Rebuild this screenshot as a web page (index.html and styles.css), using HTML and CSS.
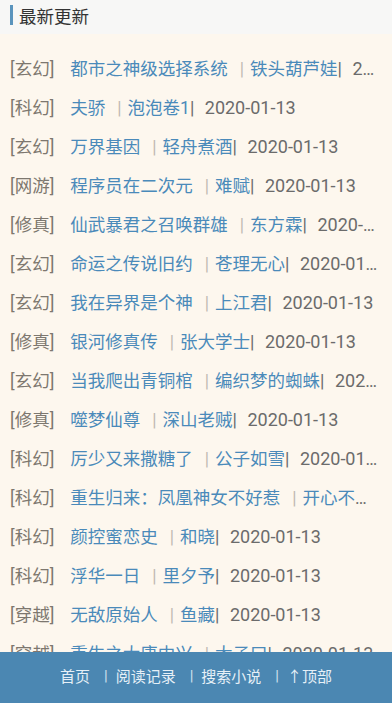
FILE: index.html
```html
<!DOCTYPE html>
<html lang="zh-CN">
<head>
<meta charset="utf-8">
<meta name="viewport" content="width=device-width, initial-scale=1">
<title>最新更新</title>
<link rel="stylesheet" href="styles.css">
</head>
<body>
<header class="head"><span class="head-bar"></span><h2 class="head-title">最新更新</h2></header>
<ul class="list">
<li class="row"><span class="cat">[玄幻]</span><a class="name" href="#">都市之神级选择系统</a><span class="sep">|</span><a class="author" href="#">铁头葫芦娃</a><span class="date">| 2020-01-13</span></li>
<li class="row"><span class="cat">[科幻]</span><a class="name" href="#">夫骄</a><span class="sep">|</span><a class="author" href="#">泡泡卷1</a><span class="date">| 2020-01-13</span></li>
<li class="row"><span class="cat">[玄幻]</span><a class="name" href="#">万界基因</a><span class="sep">|</span><a class="author" href="#">轻舟煮酒</a><span class="date">| 2020-01-13</span></li>
<li class="row"><span class="cat">[网游]</span><a class="name" href="#">程序员在二次元</a><span class="sep">|</span><a class="author" href="#">难赋</a><span class="date">| 2020-01-13</span></li>
<li class="row"><span class="cat">[修真]</span><a class="name" href="#">仙武暴君之召唤群雄</a><span class="sep">|</span><a class="author" href="#">东方霖</a><span class="date">| 2020-01-13</span></li>
<li class="row"><span class="cat">[玄幻]</span><a class="name" href="#">命运之传说旧约</a><span class="sep">|</span><a class="author" href="#">苍理无心</a><span class="date">| 2020-01-13</span></li>
<li class="row"><span class="cat">[玄幻]</span><a class="name" href="#">我在异界是个神</a><span class="sep">|</span><a class="author" href="#">上江君</a><span class="date">| 2020-01-13</span></li>
<li class="row"><span class="cat">[修真]</span><a class="name" href="#">银河修真传</a><span class="sep">|</span><a class="author" href="#">张大学士</a><span class="date">| 2020-01-13</span></li>
<li class="row"><span class="cat">[玄幻]</span><a class="name" href="#">当我爬出青铜棺</a><span class="sep">|</span><a class="author" href="#">编织梦的蜘蛛</a><span class="date">| 2020-01-13</span></li>
<li class="row"><span class="cat">[修真]</span><a class="name" href="#">噬梦仙尊</a><span class="sep">|</span><a class="author" href="#">深山老贼</a><span class="date">| 2020-01-13</span></li>
<li class="row"><span class="cat">[科幻]</span><a class="name" href="#">厉少又来撒糖了</a><span class="sep">|</span><a class="author" href="#">公子如雪</a><span class="date">| 2020-01-13</span></li>
<li class="row"><span class="cat">[科幻]</span><a class="name" href="#">重生归来：凤凰神女不好惹</a><span class="sep">|</span><a class="author" href="#">开心不语</a><span class="date">| 2020-01-13</span></li>
<li class="row"><span class="cat">[科幻]</span><a class="name" href="#">颜控蜜恋史</a><span class="sep">|</span><a class="author" href="#">和晓</a><span class="date">| 2020-01-13</span></li>
<li class="row"><span class="cat">[科幻]</span><a class="name" href="#">浮华一日</a><span class="sep">|</span><a class="author" href="#">里夕予</a><span class="date">| 2020-01-13</span></li>
<li class="row"><span class="cat">[穿越]</span><a class="name" href="#">无敌原始人</a><span class="sep">|</span><a class="author" href="#">鱼藏</a><span class="date">| 2020-01-13</span></li>
<li class="row"><span class="cat">[穿越]</span><a class="name" href="#">重生之大唐中兴</a><span class="sep">|</span><a class="author" href="#">太子曰</a><span class="date">| 2020-01-13</span></li>
<li class="row"><span class="cat">[都市]</span><a class="name" href="#">最强神医混都市</a><span class="sep">|</span><a class="author" href="#">枫叶</a><span class="date">| 2020-01-13</span></li>
</ul>
<footer class="foot"><a href="#">首页</a><span class="fsep">|</span><a href="#">阅读记录</a><span class="fsep">|</span><a href="#">搜索小说</a><span class="fsep">|</span><a href="#">↑顶部</a></footer>
</body>
</html>
```
FILE: styles.css
```css
html, body {
  margin: 0;
  padding: 0;
}
body {
  background: #fdf7ee;
  font-family: Roboto, "Noto Sans CJK SC", sans-serif;
  color: #666;
  padding-bottom: 60px;
}
a {
  text-decoration: none;
}
.head {
  display: flex;
  align-items: center;
  height: 34px;
  padding-left: 10px;
  background: #f7f7f6;
}
.head-bar {
  width: 3px;
  height: 20px;
  background: #5a94bd;
  margin-right: 6px;
  margin-top: -4px;
}
.head-title {
  margin: -4px 0 0 0;
  font-size: 17.5px;
  font-weight: normal;
  color: #333;
}
.list {
  list-style: none;
  margin: 0;
  padding: 15px 12px 0 10px;
}
.row {
  height: 39px;
  line-height: 39px;
  font-size: 17.5px;
  white-space: nowrap;
  overflow: hidden;
  text-overflow: ellipsis;
  color: #6f6f6f;
}
.cat {
  color: #7d776f;
  margin-right: 16px;
}
.name, .author {
  color: #4a8aba;
}
.name {
  margin-right: 12px;
}
.sep {
  color: #c0bab2;
  margin-right: 6px;
}
.date {
  color: #6b6b6b;
  font-size: 18px;
  word-spacing: 6px;
}
.foot {
  position: fixed;
  left: 0;
  right: 0;
  bottom: 0;
  height: 51px;
  background: #4b87b2;
  display: flex;
  justify-content: center;
  align-items: center;
  font-size: 15px;
  padding-bottom: 4px;
  box-sizing: border-box;
}
.foot a {
  color: #e6f0f7;
}
.fsep {
  color: #d0e1ee;
  margin: 0 8px 0 14px;
}
```
